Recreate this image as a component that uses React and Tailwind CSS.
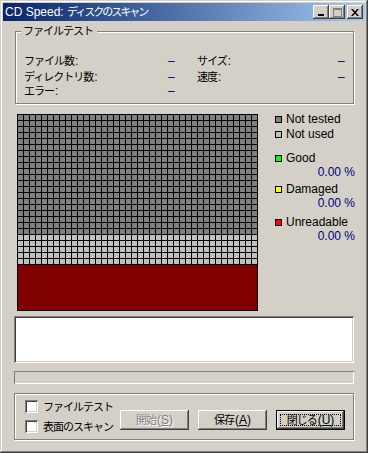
import React from 'react';

// ─── Classic 3D borders ───────────────────────────────────────────────────────

const RAISED = 'shadow-[inset_-1px_-1px_#404040,inset_1px_1px_#ffffff,inset_-2px_-2px_#808080,inset_2px_2px_#d4d0c8]';
const SUNKEN = 'shadow-[inset_1px_1px_#808080,inset_-1px_-1px_#ffffff,inset_2px_2px_#404040,inset_-2px_-2px_#d4d0c8]';
const ETCHED = 'border border-[#808080] shadow-[inset_1px_1px_#ffffff,1px_1px_#ffffff]';

const FONT = "font-['Liberation_Sans','Noto_Sans_CJK_JP',sans-serif]";
// Japanese text is set narrower, like the bitmap UI font in the reference
const JP = 'text-[11px] tracking-[-1px] whitespace-nowrap';

function Jp({ children, className = '' }) {
    return <span className={`${JP} ${className}`}>{children}</span>;
}

// ─── Title bar buttons ────────────────────────────────────────────────────────

function CaptionButton({ children, className = '' }) {
    return (
        <div className={`w-[16px] h-[14px] bg-[#d4d0c8] ${RAISED} flex items-center justify-center ${className}`}>
            {children}
        </div>
    );
}

function TitleBar() {
    return (
        <div className="h-[18px] flex items-center bg-gradient-to-r from-[#0a246a] to-[#a6caf0] pl-[2px] pr-[2px]">
            <span className="flex-1 text-white text-[12px] leading-[18px] whitespace-nowrap">
                CD Speed: <span className="text-[11px] tracking-[-2px]">ディスクのスキャン</span>
            </span>
            <CaptionButton>
                <svg width="8" height="8" viewBox="0 0 8 8"><rect x="1" y="6" width="6" height="2" fill="#000" /></svg>
            </CaptionButton>
            <CaptionButton>
                <svg width="9" height="9" viewBox="0 0 9 9">
                    <rect x="0.5" y="0.5" width="8" height="8" fill="none" stroke="#808080" />
                    <rect x="0" y="0" width="9" height="2" fill="#808080" />
                </svg>
            </CaptionButton>
            <CaptionButton className="ml-[2px]">
                <svg width="8" height="7" viewBox="0 0 8 7">
                    <path d="M0 0h2l2 2.5L6 0h2L5 3.5 8 7H6L4 4.5 2 7H0l3-3.5z" fill="#000" />
                </svg>
            </CaptionButton>
        </div>
    );
}

// ─── File test group ──────────────────────────────────────────────────────────

function Stat({ label, className = '' }) {
    return (
        <span className={`leading-[14px] text-[12px] text-black whitespace-nowrap ${className}`}>
            <Jp className="mr-[1px]">{label}</Jp>:
        </span>
    );
}

function Dash({ className = '' }) {
    return <span className={`text-[12px] leading-[14px] text-[#000080] ${className}`}>–</span>;
}

function FileTestGroup() {
    return (
        <div className={`relative ml-[12px] mt-[10px] w-[339px] h-[73px] ${ETCHED}`}>
            <span className={`absolute left-[5px] top-[-8px] bg-[#d4d0c8] pl-[2px] pr-[4px] leading-[14px] ${JP}`}>ファイルテスト</span>
            <div className="pt-[22px] pl-[8px]">
                <div className="flex h-[14px]">
                    <Stat label="ファイル数" className="w-[144px]" />
                    <Dash className="w-[29px]" />
                    <Stat label="サイズ" className="w-[141px]" />
                    <Dash />
                </div>
                <div className="flex h-[14px] mt-[2px]">
                    <Stat label="ディレクトリ数" className="w-[144px]" />
                    <Dash className="w-[29px]" />
                    <Stat label="速度" className="w-[141px]" />
                    <Dash />
                </div>
                <div className="flex h-[14px]">
                    <Stat label="エラー" className="w-[144px]" />
                    <Dash />
                </div>
            </div>
        </div>
    );
}

// ─── Scan map ─────────────────────────────────────────────────────────────────

const COLS = 40;
const ROWS = [
    ...Array.from({ length: 20 }, () => 'bg-[#808080]'),
    ...Array.from({ length: 5 }, () => 'bg-[#c0c0c0]'),
];

function ScanMap() {
    return (
        <div className="w-[241px] h-[197px] border border-black bg-black flex flex-col gap-px">
            {ROWS.map((color, r) => (
                <div key={r} className="flex gap-px">
                    {Array.from({ length: COLS }, (_, c) => (
                        <div key={c} className={`w-[5px] h-[5px] ${color}`} />
                    ))}
                </div>
            ))}
            <div className="flex-1 bg-[#800000]" />
        </div>
    );
}

function Swatch({ color }) {
    return <span className={`w-[7px] h-[7px] border border-black ${color} shrink-0`} />;
}

function LegendItem({ color, label, className = '' }) {
    return (
        <div className={`flex items-center gap-[4px] h-[14px] text-[12px] leading-[14px] ${className}`}>
            <Swatch color={color} />
            <span>{label}</span>
        </div>
    );
}

function Pct() {
    return <div className="h-[14px] text-right text-[12px] leading-[14px] text-[#000080]">0.00 %</div>;
}

function Legend() {
    return (
        <div className="w-[80px] ml-[17px] mt-[-2px]">
            <LegendItem color="bg-[#808080]" label="Not tested" />
            <LegendItem color="bg-[#c0c0c0]" label="Not used" className="mt-[1px]" />
            <LegendItem color="bg-[#00ff00]" label="Good" className="mt-[10px]" />
            <Pct />
            <LegendItem color="bg-[#ffff00]" label="Damaged" className="mt-[3px]" />
            <Pct />
            <LegendItem color="bg-[#ff0000]" label="Unreadable" className="mt-[5px]" />
            <Pct />
        </div>
    );
}

// ─── Controls ─────────────────────────────────────────────────────────────────

function Checkbox({ label }) {
    return (
        <div className="flex items-center gap-[5px]">
            <span className={`w-[13px] h-[13px] bg-white shrink-0 ${SUNKEN}`} />
            <span className={`leading-[14px] ${JP}`}>{label}</span>
        </div>
    );
}

function Caption({ text, mnemonic }) {
    return (
        <span className="text-[12px] whitespace-nowrap">
            <Jp className="mr-[1px]">{text}</Jp>(<u>{mnemonic}</u>)
        </span>
    );
}

function Button({ children, disabled, isDefault }) {
    if (isDefault) {
        return (
            <div className="w-[69px] h-[20px] border border-black">
                <div className={`w-full h-full ${RAISED} flex items-center justify-center p-[3px]`}>
                    <div className="w-full h-full border border-dotted border-black flex items-center justify-center leading-[12px]">
                        {children}
                    </div>
                </div>
            </div>
        );
    }
    return (
        <div
            className={`w-[69px] h-[20px] ${RAISED} flex items-center justify-center leading-[14px] ${
                disabled ? 'text-[#808080] [text-shadow:1px_1px_#ffffff]' : 'text-black'
            }`}
        >
            {children}
        </div>
    );
}

function BottomGroup() {
    return (
        <div className={`ml-[11px] mt-[9px] w-[340px] h-[47px] ${ETCHED} flex items-center pl-[10px]`}>
            <div className="w-[95px] flex flex-col gap-[6px]">
                <Checkbox label="ファイルテスト" />
                <Checkbox label="表面のスキャン" />
            </div>
            <div className="flex gap-[9px] mt-[6px]">
                <Button disabled><Caption text="開始" mnemonic="S" /></Button>
                <Button><Caption text="保存" mnemonic="A" /></Button>
                <Button isDefault><Caption text="閉じる" mnemonic="U" /></Button>
            </div>
        </div>
    );
}

// ─── Window ───────────────────────────────────────────────────────────────────

export default function App() {
    return (
        <div
            className={`w-[368px] h-[453px] bg-[#d4d0c8] p-[3px] text-black ${FONT} shadow-[inset_-1px_-1px_#404040,inset_1px_1px_#d4d0c8,inset_-2px_-2px_#808080,inset_2px_2px_#ffffff]`}
        >
            <TitleBar />
            <FileTestGroup />

            <div className="flex ml-[14px] mt-[10px]">
                <ScanMap />
                <Legend />
            </div>

            <div className={`ml-[11px] mt-[5px] w-[340px] h-[47px] bg-white ${SUNKEN}`} />
            <div className="ml-[11px] mt-[8px] w-[340px] h-[13px] shadow-[inset_1px_1px_#808080,inset_-1px_-1px_#ffffff]" />

            <BottomGroup />
        </div>
    );
}
